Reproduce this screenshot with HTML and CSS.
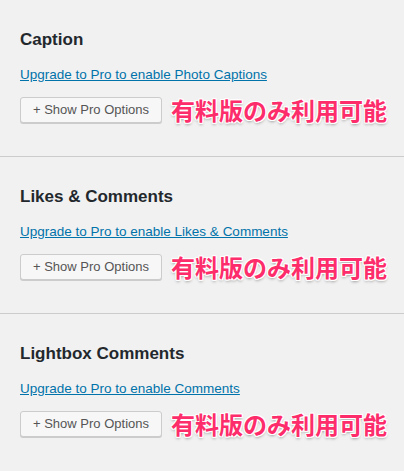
FILE: index.html
```html
<!DOCTYPE html>
<html lang="ja">
<head>
    <meta charset="UTF-8">
    <meta name="viewport" content="width=device-width, initial-scale=1.0">
    <title>Pro Options</title>
    <link rel="stylesheet" href="styles.css">
</head>
<body>

    <div class="section">
        <h2>Caption</h2>
        <p class="upgrade"><a href="#">Upgrade to Pro to enable Photo Captions</a></p>
        <div class="pro-row">
            <button type="button" class="button">+ Show Pro Options</button>
            <span class="note">有料版のみ利用可能</span>
        </div>
    </div>

    <div class="section">
        <h2>Likes &amp; Comments</h2>
        <p class="upgrade"><a href="#">Upgrade to Pro to enable Likes &amp; Comments</a></p>
        <div class="pro-row">
            <button type="button" class="button">+ Show Pro Options</button>
            <span class="note">有料版のみ利用可能</span>
        </div>
    </div>

    <div class="section">
        <h2>Lightbox Comments</h2>
        <p class="upgrade"><a href="#">Upgrade to Pro to enable Comments</a></p>
        <div class="pro-row">
            <button type="button" class="button">+ Show Pro Options</button>
            <span class="note">有料版のみ利用可能</span>
        </div>
    </div>

</body>
</html>
```

FILE: styles.css
```css
body {
    font-family: 'Liberation Sans', Arial, sans-serif;
    font-size: 13px;
    background-color: #f1f1f1;
    color: #444;
    margin: 0;
    padding: 0;
}

.section {
    padding: 30px 0 32px 20px;
    border-bottom: 1px solid #cccccc;
}

    .section:last-child {
        border-bottom: none;
    }

h2 {
    margin: 0 0 15px;
    font-size: 17px;
    line-height: 20px;
    font-weight: bold;
    color: #23282d;
}

.upgrade {
    margin: 0 0 11px;
    font-size: 13.5px;
    line-height: 20px;
}

    .upgrade a {
        color: #0073aa;
        text-decoration: underline;
    }

.pro-row {
    display: flex;
    align-items: center;
    gap: 9px;
}

.button {
    height: 26px;
    padding: 0 12px;
    font-family: 'Liberation Sans', Arial, sans-serif;
    font-size: 13px;
    line-height: 24px;
    color: #555;
    background-color: #f7f7f7;
    border: 1px solid #cccccc;
    border-radius: 3px;
    box-shadow: 0 1px 0 #cccccc;
    cursor: pointer;
}

.note {
    font-family: 'Noto Sans CJK JP', sans-serif;
    font-size: 24px;
    line-height: 28px;
    font-weight: bold;
    color: #fd2d6c;
    text-shadow:
        1px 0 0 #fff, -1px 0 0 #fff, 0 1px 0 #fff, 0 -1px 0 #fff,
        1px 1px 0 #fff, -1px -1px 0 #fff, 1px -1px 0 #fff, -1px 1px 0 #fff,
        0 2px 3px rgba(0, 0, 0, 0.35);
}
```
